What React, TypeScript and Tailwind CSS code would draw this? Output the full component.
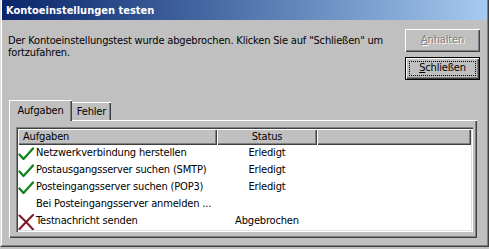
import React from 'react';

const FONT = { fontFamily: '"DejaVu Sans Condensed", "Liberation Sans", sans-serif' };

const ROWS = [
  { icon: 'ok', task: 'Netzwerkverbindung herstellen', status: 'Erledigt' },
  { icon: 'ok', task: 'Postausgangsserver suchen (SMTP)', status: 'Erledigt' },
  { icon: 'ok', task: 'Posteingangsserver suchen (POP3)', status: 'Erledigt' },
  { icon: '', task: 'Bei Posteingangsserver anmelden ...', status: '' },
  { icon: 'fail', task: 'Testnachricht senden', status: 'Abgebrochen' },
];

function CheckIcon() {
  return (
    <svg width="16" height="16" viewBox="0 0 16 16">
      <path d="M1.5 8.5 L5.5 13 L15 2.5" fill="none" stroke="#0b7a18" strokeWidth="2.2" strokeLinecap="round" strokeLinejoin="round" />
      <path d="M2 8 L5.5 12 L14.5 2" fill="none" stroke="#2fa53c" strokeWidth="0.8" strokeLinecap="round" />
    </svg>
  );
}

function CrossIcon() {
  return (
    <svg width="16" height="16" viewBox="0 0 16 16">
      <path d="M1.5 1.5 Q8 7.5 15 15.5 M15 1 Q8 8 1.5 15" fill="none" stroke="#7d1424" strokeWidth="2" strokeLinecap="round" />
    </svg>
  );
}

const raised = 'shadow-[inset_1px_1px_0_#ffffff,inset_-1px_-1px_0_#404040,inset_-2px_-2px_0_#808080]';

export default function App() {
  return (
    <div className="w-[489px] h-[249px] overflow-hidden bg-[#c0c0c0] text-[11px] tracking-[-0.17px] text-black" style={FONT}>
      {/* window frame */}
      <div className="h-[247px] border-l border-l-[#dfdfdf] border-r border-r-[#404040] border-b border-b-[#404040]">
        <div className="h-full flex flex-col border-l border-l-white border-r border-r-[#808080] border-b border-b-[#808080]">
          {/* title bar */}
          <div className="h-[20px] shrink-0 flex items-center pl-[4px] bg-linear-to-r from-[#0a246a] to-[#a6caf0]">
            <span className="text-white font-bold text-[11px] leading-none tracking-normal">Kontoeinstellungen testen</span>
          </div>

          {/* message + buttons */}
          <div className="h-[80px] shrink-0 flex">
            <p className="flex-1 pl-[6px] pt-[15px] leading-[12px] whitespace-nowrap">
              Der Kontoeinstellungstest wurde abgebrochen. Klicken Sie auf "Schließen" um
              <br />
              fortzufahren.
            </p>
            <div className="mt-[9px] mr-[7px] flex flex-col gap-[5px]">
              <div className={`w-[75px] h-[23px] flex items-center justify-center ${raised}`}>
                <span className="text-[#808080] [text-shadow:1px_1px_0_#ffffff]">
                  <span className="underline">A</span>nhalten
                </span>
              </div>
              <div className="w-[75px] h-[23px] border border-black">
                <div className={`h-full flex items-center justify-center p-[3px] ${raised}`}>
                  <div className="w-full h-full flex items-center justify-center border border-dotted border-black">
                    <span>
                      <span className="underline">S</span>chließen
                    </span>
                  </div>
                </div>
              </div>
            </div>
          </div>

          {/* tabs */}
          <div className="h-[20px] shrink-0 flex items-end pl-[7px]">
            <div className="relative z-10 h-[21px] w-[63px] -mb-px bg-[#c0c0c0] flex items-start justify-center pt-[3px] shadow-[inset_1px_1px_0_#ffffff,inset_-1px_0_0_#404040,inset_-2px_0_0_#808080]">
              Aufgaben
            </div>
            <div className="h-[18px] w-[39px] flex items-start justify-center pt-[2px] shadow-[inset_0_1px_0_#ffffff,inset_-1px_0_0_#404040,inset_-2px_0_0_#808080]">
              Fehler
            </div>
          </div>

          {/* tab panel */}
          <div className="ml-[7px] w-[468px] h-[118px] p-[7px] shadow-[inset_1px_1px_0_#ffffff,inset_-1px_-1px_0_#404040,inset_-2px_-2px_0_#808080]">
            <div className="w-[457px] h-[105px] bg-white p-[2px] shadow-[inset_1px_1px_0_#808080,inset_2px_2px_0_#404040,inset_-1px_-1px_0_#ffffff,inset_-2px_-2px_0_#dfdfdf]">
              <div className="flex h-[16px]">
                <div className={`w-[199px] bg-[#c0c0c0] pl-[5px] leading-[16px] ${raised}`}>Aufgaben</div>
                <div className={`w-[100px] bg-[#c0c0c0] text-center leading-[16px] ${raised}`}>Status</div>
                <div className={`w-[154px] bg-[#c0c0c0] ${raised}`} />
              </div>
              {ROWS.map((r) => (
                <div key={r.task} className="flex h-[17px] items-center">
                  <div className="w-[199px] flex items-center">
                    <span className="w-[18px] h-[16px] flex items-center">
                      {r.icon === 'ok' && <CheckIcon />}
                      {r.icon === 'fail' && <CrossIcon />}
                    </span>
                    <span className="whitespace-nowrap">{r.task}</span>
                  </div>
                  <div className="w-[100px] text-center">{r.status}</div>
                </div>
              ))}
            </div>
          </div>
        </div>
      </div>
    </div>
  );
}
